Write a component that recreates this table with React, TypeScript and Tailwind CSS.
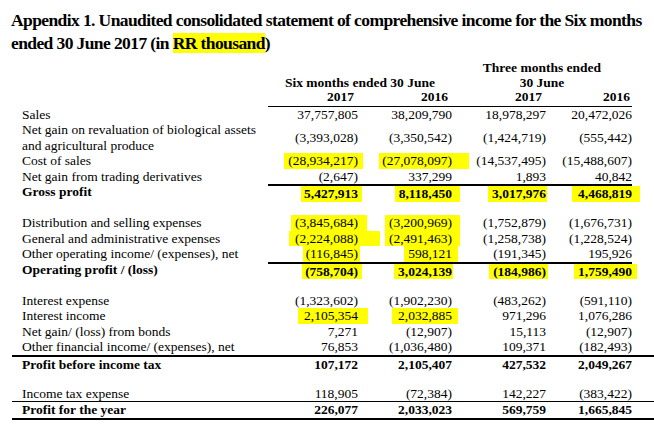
import React from "react"

// ─── DATA ────────────────────────────────────────────────

type Line = "none" | "cols1" | "cols2" | "full1" | "full2"

type RowDef = {
  label: string[]
  values: string[]
  bold?: boolean
  hl?: (string | null)[]
  line?: Line
  under?: boolean
  gapBefore?: boolean
}

const HL = "bg-[#ffff00]"

const ROWS: RowDef[] = [
  { label: ["Sales"], values: ["37,757,805", "38,209,790", "18,978,297", "20,472,026"] },
  {
    label: ["Net gain on revaluation of biological assets", "and agricultural produce"],
    values: ["(3,393,028)", "(3,350,542)", "(1,424,719)", "(555,442)"],
  },
  {
    label: ["Cost of sales"],
    values: ["(28,934,217)", "(27,078,097)", "(14,537,495)", "(15,488,607)"],
    hl: [`${HL} pl-[4px] pr-[5px] -mr-[5px]`, `${HL} pl-[3px] pr-[17px] -mr-[17px]`, null, null],
  },
  { label: ["Net gain from trading derivatives"], values: ["(2,647)", "337,299", "1,893", "40,842"] },
  {
    label: ["Gross profit"],
    values: ["5,427,913", "8,118,450", "3,017,976", "4,468,819"],
    bold: true,
    line: "cols2",
    hl: [
      `${HL} pl-[3px] pr-[4px] -mr-[4px]`,
      `${HL} pl-[4px] pr-[8px] -mr-[8px]`,
      `${HL} pl-[4px] pr-[1px] -mr-[1px]`,
      `${HL} pl-[6px] pr-[8px] -mr-[8px]`,
    ],
  },
  {
    label: ["Distribution and selling expenses"],
    values: ["(3,845,684)", "(3,200,969)", "(1,752,879)", "(1,676,731)"],
    gapBefore: true,
    hl: [`${HL} pl-[4px] pr-[9px] -mr-[9px]`, `${HL} pl-[4px] pr-[8px] -mr-[8px]`, null, null],
  },
  {
    label: ["General and administrative expenses"],
    values: ["(2,224,088)", "(2,491,463)", "(1,258,738)", "(1,228,524)"],
    hl: [`${HL} pl-[6px] pr-[22px] -mr-[22px]`, `${HL} pl-[4px] pr-[8px] -mr-[8px]`, null, null],
  },
  {
    label: ["Other operating income/ (expenses), net"],
    values: ["(116,845)", "598,121", "(191,345)", "195,926"],
    hl: [`${HL} pl-[3px] pr-[2px] -mr-[2px]`, `${HL} pl-[4px] pr-[6px] -mr-[6px]`, null, null],
  },
  {
    label: ["Operating profit / (loss)"],
    values: ["(758,704)", "3,024,139", "(184,986)", "1,759,490"],
    bold: true,
    line: "cols2",
    hl: [
      `${HL} pl-[3px] pr-[4px] -mr-[4px]`,
      `${HL} pl-[4px] pr-[1px] -mr-[1px]`,
      `${HL} pl-[4px] pr-[2px] -mr-[2px]`,
      `${HL} pl-[4px] pr-[5px] -mr-[5px]`,
    ],
  },
  {
    label: ["Interest expense"],
    values: ["(1,323,602)", "(1,902,230)", "(483,262)", "(591,110)"],
    gapBefore: true,
  },
  {
    label: ["Interest income"],
    values: ["2,105,354", "2,032,885", "971,296", "1,076,286"],
    hl: [`${HL} pl-[6px] pr-[10px] -mr-[10px]`, `${HL} pl-[6px] pr-[6px] -mr-[6px]`, null, null],
  },
  { label: ["Net gain/ (loss) from bonds"], values: ["7,271", "(12,907)", "15,113", "(12,907)"] },
  {
    label: ["Other financial income/ (expenses), net"],
    values: ["76,853", "(1,036,480)", "109,371", "(182,493)"],
  },
  {
    label: ["Profit before income tax"],
    values: ["107,172", "2,105,407", "427,532", "2,049,267"],
    bold: true,
    line: "full2",
  },
  {
    label: ["Income tax expense"],
    values: ["118,905", "(72,384)", "142,227", "(383,422)"],
    gapBefore: true,
  },
  {
    label: ["Profit for the year"],
    values: ["226,077", "2,033,023", "569,759", "1,665,845"],
    bold: true,
    line: "full1",
    under: true,
  },
]

// ─── COMPONENTS ─────────────────────────────────────────

const GRID = "grid grid-cols-[256px_90px_94px_94px_86px]"

function Row({ row }: { row: RowDef }) {
  const full =
    row.line === "full2"
      ? "border-t-2 border-black"
      : row.line === "full1"
        ? "border-t-[1.5px] border-black"
        : ""
  const cell =
    row.line === "cols2"
      ? "border-t-2 border-black"
      : row.line === "cols1"
        ? "border-t border-black"
        : ""
  const under = row.under ? "border-b-2 border-black" : ""
  const weight = row.bold ? "font-bold" : ""

  return (
    <>
      {/* blank spacer row, a bit shorter to absorb the rule above it */}
      {row.gapBefore && <div className="h-[13.5px]" />}
      <div className={`${GRID} ${full} ${under} ${weight} leading-[15.5px]`}>
        <div className="pl-[10px]">
          {row.label.map((l) => (
            <div key={l} className="whitespace-nowrap">
              {l}
            </div>
          ))}
        </div>
        {row.values.map((v, i) => (
          <div key={i} className={`${cell} flex items-center justify-end whitespace-nowrap`}>
            {row.hl && row.hl[i] ? <span className={row.hl[i]!}>{v}</span> : <span>{v}</span>}
          </div>
        ))}
      </div>
    </>
  )
}

export default function App() {
  return (
    <div className="w-[654px] h-[429px] bg-white text-black font-['Liberation_Serif','Times_New_Roman',serif] overflow-hidden">
      {/* Title */}
      <h1 className="pt-[9px] pl-[11px] text-[17.5px] font-bold leading-[23px] tracking-[-0.6px] whitespace-nowrap">
        <div>Appendix 1. Unaudited consolidated statement of comprehensive income for the Six months</div>
        <div>
          ended 30 June 2017 (in <span className="bg-[#ffff00]">RR thousand</span>)
        </div>
      </h1>

      {/* Table */}
      <div className="pl-3 pt-[6px] text-[13.5px]">
        {/* Column headers */}
        <div className={`${GRID} font-bold leading-[14.5px]`}>
          <div />
          <div className="col-span-2" />
          <div className="col-span-2 text-center">Three months ended</div>

          <div />
          <div className="col-span-2 text-center">Six months ended 30 June</div>
          <div className="col-span-2 text-center">30 June</div>

          <div />
          <div className="text-right pr-[4px]">2017</div>
          <div className="text-right pr-[4px]">2016</div>
          <div className="text-right pr-[4px]">2017</div>
          <div className="text-right pr-[2px]">2016</div>
        </div>
        <div className={`${GRID} mt-[1px]`}>
          <div />
          <div className="col-span-4 border-t-[1.5px] border-black" />
        </div>

        {ROWS.map((r) => (
          <Row key={r.label[0]} row={r} />
        ))}
      </div>
    </div>
  )
}
